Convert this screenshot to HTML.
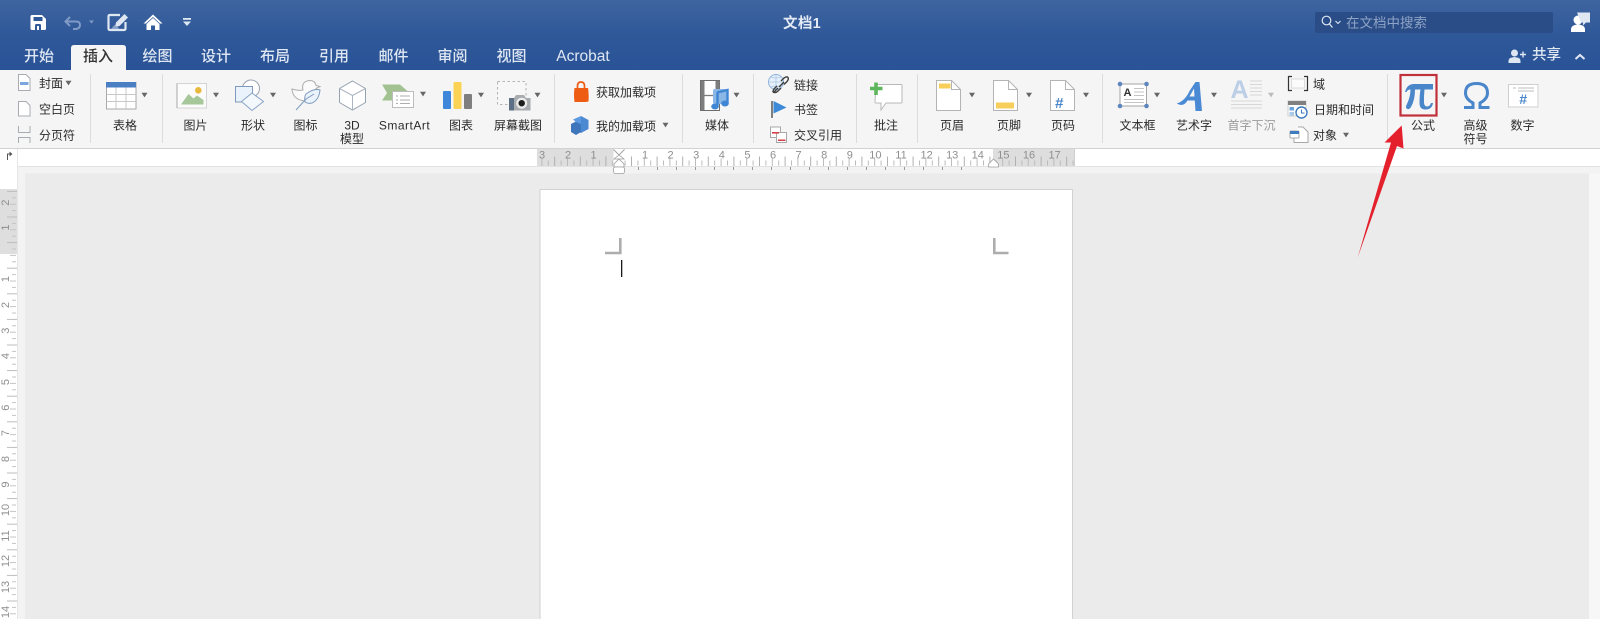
<!DOCTYPE html>
<html lang="zh"><head><meta charset="utf-8"><title>文档1</title>
<style>
html,body{margin:0;padding:0;width:1600px;height:619px;overflow:hidden;background:#ebebeb}
svg{display:block;filter:blur(.3px)}
text{font-family:"Liberation Sans","Noto Sans CJK SC",sans-serif}
.l{font-size:12px;fill:#2b2b2b;text-anchor:middle}
.s{font-size:12px;fill:#2b2b2b}
.t{font-size:15px;fill:#dfe7f3;text-anchor:middle;font-weight:500}
.n{font-size:11px;fill:#8e8e8e;text-anchor:middle}
</style></head><body>
<svg width="1600" height="619" viewBox="0 0 1600 619" xmlns="http://www.w3.org/2000/svg">
<defs>
<linearGradient id="tb" x1="0" y1="0" x2="0" y2="1"><stop offset="0" stop-color="#3f659f"/><stop offset=".5" stop-color="#2f5899"/><stop offset="1" stop-color="#2a5397"/></linearGradient>
<path id="ar" d="M-3-2.2h6L0 2.4z" fill="#666"/>
<pattern id="hr" patternUnits="userSpaceOnUse" x="631" y="148" width="25.6" height="20">
<rect x="0" y="8.5" width="1" height="9.5" fill="#b0b0b0"/><rect x="6.4" y="12.5" width="1" height="5" fill="#bbb"/><rect x="12.8" y="10.5" width="1" height="7.5" fill="#bbb"/><rect x="19.2" y="12.5" width="1" height="5" fill="#bbb"/>
</pattern>
<pattern id="vr" patternUnits="userSpaceOnUse" x="0" y="267.7" width="18" height="25.6">
<rect x="7" y="0" width="10" height="1" fill="#bdbdbd"/><rect x="12" y="6.4" width="4" height="1" fill="#c4c4c4"/><rect x="10" y="12.8" width="6" height="1" fill="#c4c4c4"/><rect x="12" y="19.2" width="4" height="1" fill="#c4c4c4"/>
</pattern>
<pattern id="bt" patternUnits="userSpaceOnUse" x="638" y="166" width="19" height="6"><rect x="0" y="1" width="1" height="3" fill="#999"/></pattern>
</defs>

<!-- backgrounds -->
<rect width="1600" height="70" fill="url(#tb)"/>
<rect y="70" width="1600" height="78" fill="#f5f5f5"/>
<rect y="148" width="1600" height="1" fill="#d2d2d2"/>
<rect y="149" width="1600" height="17" fill="#fff"/>
<rect x="17" y="166" width="1583" height="453" fill="#f3f3f3"/>
<rect y="166" width="1600" height="1" fill="#e2e2e2"/>
<rect y="149" width="17" height="470" fill="#fff"/>
<rect x="17" y="149" width="1" height="470" fill="#e6e6e6"/>
<rect x="25" y="173.5" width="1564" height="446" fill="#ebebeb"/>
<rect x="1589" y="173.5" width="11" height="446" fill="#f7f7f7"/>

<!-- tabs -->
<path d="M71 70V48q0-3 3-3h49q3 0 3 3v22z" fill="#f5f5f5"/>
<text class="t" x="39" y="61">开始</text>
<text class="t" x="98" y="61" style="fill:#333">插入</text>
<text class="t" x="157.500" y="61">绘图</text>
<text class="t" x="216" y="61">设计</text>
<text class="t" x="275" y="61">布局</text>
<text class="t" x="334" y="61">引用</text>
<text class="t" x="393.500" y="61">邮件</text>
<text class="t" x="452.500" y="61">审阅</text>
<text class="t" x="511.500" y="61">视图</text>
<text class="t" x="583" y="61" style="font-size:15.500px">Acrobat</text>
<text x="802" y="28" text-anchor="middle" style="font-size:14.500px;font-weight:700;fill:#e4ebf5;letter-spacing:.3px">文档1</text>

<!-- quick access -->
<path d="M32 15h10l4 4v9.500q0 1.500-1.500 1.500h-12.500q-1.500 0-1.500-1.500v-12q0-1.500 1.500-1.500z" fill="#fff"/>
<rect x="33.500" y="17" width="9" height="4" fill="#2f5899"/>
<path d="M35 30v-4.500q0-1.500 1.500-1.500h3q1.500 0 1.500 1.500V30h-2v-4h-2v4z" fill="#2f5899"/>
<path d="M70 17l-4.500 4.500 4.500 4.500M66 21.500h10q4 0 4 3.500t-4 4h-3" fill="none" stroke="#7f9bc6" stroke-width="2"/>
<path d="M89 20.500h5l-2.500 3z" fill="#7f9bc6"/>
<path d="M120 15h-10q-1.500 0-1.500 1.500v12q0 1.500 1.500 1.500h14q1.500 0 1.500-1.500V22" fill="none" stroke="#dfe7f3" stroke-width="2.200"/>
<path d="M115 27l1-4.500 8.500-8.500 3.500 3.500-8.500 8.500z" fill="#dfe7f3"/>
<path d="M111 29l3.500-4 3 2 2 2z" fill="#8aa4cc"/>
<path d="M153 14.500l-9.500 9h2.500l7-6.500 7 6.500h2.500z" fill="#fff"/>
<path d="M146.500 24l6.500-6 6.500 6v6h-4.500v-4.500h-4V30h-4.500z" fill="#fff"/>
<rect x="183" y="18" width="8" height="1.800" fill="#dfe7f3"/><path d="M183 21.500h8l-4 4.500z" fill="#dfe7f3"/>

<!-- search & account -->
<rect x="1315" y="12" width="238" height="21" rx="2" fill="#2a4d87"/>
<circle cx="1326.500" cy="20.500" r="4.300" fill="none" stroke="#dfe7f3" stroke-width="1.200"/><path d="M1329.500 24l3 3.500" stroke="#dfe7f3" stroke-width="1.300"/>
<path d="M1335.500 21l2.500 2.500 2.500-2.500" fill="none" stroke="#dfe7f3" stroke-width="1.100"/>
<text x="1346" y="27.500" style="font-size:13.500px;fill:#8ea3c5">在文档中搜索</text>
<circle cx="1578" cy="20" r="4.500" fill="#fff"/>
<path d="M1571 32v-2.500q0-3.500 4-4.500l3-1 3 1q4 1 4 4.500V32z" fill="#fff"/>
<path d="M1577 12.500h13v10h-4l-3 3v-3h-2z" fill="#dfe7f3"/>
<circle cx="1514.500" cy="53" r="3.500" fill="#dfe7f3"/><path d="M1508.500 63v-2q0-3 3.500-3.500l2.500-.5 2.500.5q3.500.5 3.500 3.500v2z" fill="#dfe7f3"/>
<path d="M1520 54.500h6M1523 51.500v6" stroke="#dfe7f3" stroke-width="1.400"/>
<text class="t" x="1546.500" y="59.500" style="font-size:14.500px">共享</text>
<path d="M1575.500 59l4.500-4 4.500 4" fill="none" stroke="#dfe7f3" stroke-width="2"/>

<!-- separators -->
<path d="M90.500 74v69M162.500 74v69M554.500 74v69M682.500 74v69M753.500 74v69M856.500 74v69M917.500 74v69M1102.500 74v69M1387.500 74v69" stroke="#dcdcdc" stroke-width="1"/>

<!-- left column -->
<path d="M18.500 74.500h7.500l4 4v12h-11.500z" fill="#fff" stroke="#a8acb2"/><rect x="20" y="82" width="8.500" height="3" fill="#7ba7dc"/>
<path d="M18.500 101.500h7.500l4 4v10.500h-11.500z" fill="#fff" stroke="#a8acb2"/>
<path d="M18.500 126v6.500h11.500V126M18.500 143v-5.500h11.500V143" fill="none" stroke="#a8acb2"/>
<text class="s" x="39" y="87.500">封面</text><use href="#ar" x="68.500" y="83"/>
<text class="s" x="39" y="113.500">空白页</text>
<text class="s" x="39" y="139.500">分页符</text>

<!-- table -->
<rect x="106.500" y="82.500" width="29.500" height="26.500" fill="#fff" stroke="#a8a8a8"/>
<rect x="106" y="82" width="30" height="5.500" fill="#4a7fc4"/>
<path d="M116 87.500V109M126 87.500V109M106.500 94.500H136M106.500 101.500H136" stroke="#c8c8c8"/>
<use href="#ar" x="144.500" y="95"/>
<text class="l" x="125" y="129.500">表格</text>

<!-- picture -->
<rect x="177" y="83.500" width="29.500" height="24.500" fill="#fbfbfb" stroke="#d4d4d4"/>
<path d="M177 83.500V108" stroke="#a8a8a8"/>
<circle cx="198.300" cy="90.300" r="3.300" fill="#e9b93f"/>
<path d="M181 104.500L188.500 94l5 4.500 3.500-3 6.500 4.500v4.500z" fill="#a5c79a"/>
<use href="#ar" x="216" y="95"/>
<text class="l" x="195.500" y="129.500">图片</text>

<!-- shapes -->
<circle cx="251" cy="88.500" r="8.500" fill="#fff" stroke="#97a2b0"/>
<rect x="235.500" y="86.500" width="17" height="15.500" fill="#eaf2fb" stroke="#7f9abe"/>
<path d="M252 93l11.500 8.500-11.500 9-10.500-9z" fill="#f3f8fd" stroke="#8aa3c4"/>
<use href="#ar" x="273" y="95"/>
<text class="l" x="253" y="129.500">形状</text>

<!-- icons -->
<path d="M292 89q6 2 11 1-2-9 7-9.500 5 0 6 5l4 1-4 2q-1 10-7 12-3 1-7 0-9-2-10-11z" fill="#fbfbfb" stroke="#adadad"/>
<path d="M306 94q8-6 14-4-1 10-8 13-4 1-7-1-1-5 1-8z" fill="#eaf2fb" stroke="#7d9bbd"/>
<path d="M296 110l10-11 8-5" fill="none" stroke="#7d9bbd"/>
<text class="l" x="305.500" y="129.500">图标</text>

<!-- cube -->
<path d="M352.500 81l13 7.500v14l-13 7.500-13-7.500v-14z" fill="#fff" stroke="#97a2b0"/>
<path d="M339.500 88.500l13 7 13-7M352.500 95.500V110" fill="none" stroke="#adb5c2"/>
<text class="l" x="352" y="129.500">3D</text>
<text class="l" x="352" y="143">模型</text>

<!-- smartart -->
<path d="M382 84.500h18l8 7h-15v9h-11l5-7.500z" fill="#a3c291"/>
<rect x="392.500" y="91.500" width="21" height="16" fill="#fff" stroke="#bcbcbc"/>
<path d="M396 96h2M400 96h10M396 100h2M400 100h10M396 103.500h2M400 103.500h10" stroke="#adadad"/>
<use href="#ar" x="423" y="94"/>
<text class="l" x="404.500" y="129.500" style="letter-spacing:.5px">SmartArt</text>

<!-- chart -->
<rect x="443" y="91" width="8" height="18" rx="1" fill="#3f87d9"/>
<rect x="453.500" y="82" width="8" height="27" rx="1" fill="#fcd255"/>
<rect x="464" y="94" width="8" height="15" rx="1" fill="#7f7f7f"/>
<use href="#ar" x="481" y="95"/>
<text class="l" x="461" y="129.500">图表</text>

<!-- screenshot -->
<rect x="497.500" y="81.500" width="28.500" height="23" fill="#f7f7f7" stroke="#b4b4b4" stroke-dasharray="2.500 2.500"/>
<path d="M509 98h5l2-3h8l2 3h4.500v12.500H509z" fill="#a8abaf"/>
<rect x="509" y="98" width="5" height="12.500" fill="#5d6f85"/>
<circle cx="521.700" cy="103.200" r="5.500" fill="#ececec"/><circle cx="521.700" cy="103.200" r="3.200" fill="#1d1d1d"/>
<use href="#ar" x="537.500" y="95"/>
<text class="l" x="518" y="129.500">屏幕截图</text>

<!-- addins -->
<path d="M574.500 88h13.500q1 6 .5 13.500l-3 .5h-11q-1-7 0-14z" fill="#ee5b12"/>
<path d="M577.500 89v-3q0-4 3.500-4t3.500 4v3" fill="none" stroke="#ee5b12" stroke-width="1.700"/>
<text class="s" x="596" y="96.500">获取加载项</text>
<path d="M581 116l7.500 4v9l-7.500 4-2-1v-7l-1-.5z" fill="#4b89d3"/><path d="M571 124l5-2.500 5 2.500v8l-5 3-5-3z" fill="#3f75bb"/><path d="M573 119.500l8-3.500v8l-5-2z" fill="#5b99e0"/>
<text class="s" x="596" y="130.500">我的加载项</text>
<use href="#ar" x="665.500" y="125"/>

<!-- media -->
<rect x="700.500" y="80.500" width="19" height="30" fill="#fff" stroke="#6e6e6e"/>
<path d="M701 81h3.500v29H701zM715.500 81h4v10h-4z" fill="#7e7e7e"/>
<path d="M704 95.500h10" stroke="#7c7c7c" stroke-width="1.300"/>
<rect x="713" y="89" width="15.500" height="15" rx="2" fill="#8ab7e6"/>
<path d="M717 92.500l10.500-2.500v13.500" fill="none" stroke="#3f86d4" stroke-width="2.400"/>
<path d="M717.500 92.500v14" stroke="#3f86d4" stroke-width="2.400"/>
<ellipse cx="715" cy="106.500" rx="3.800" ry="3" fill="#3f86d4"/><ellipse cx="725" cy="103.500" rx="3.800" ry="3" fill="#3f86d4"/>
<use href="#ar" x="736.500" y="95"/>
<text class="l" x="717" y="129.500">媒体</text>

<!-- link group -->
<circle cx="776" cy="82" r="7.500" fill="#e6f0fb" stroke="#8fb2dc"/>
<path d="M769 82h14M776 75v14M771 77q5 2 10 0M771 87q5-2 10 0" fill="none" stroke="#aac6e6" stroke-width=".8"/>
<path d="M774 92l4-4M781 81l3-3q3-2 4-.5t-1 4l-3 3M777 86l-3 3q-2 3 0 3.500t4-1.500l3-3M779 87l5-5" fill="none" stroke="#3c3c3c" stroke-width="1.400"/>
<text class="s" x="794" y="89.500">链接</text>
<rect x="771" y="101" width="2" height="17" fill="#7f7f7f"/><path d="M773.500 101l13 6.500-13 6z" fill="#3c8ad8"/>
<text class="s" x="794" y="114">书签</text>
<rect x="770.500" y="127" width="10" height="10.500" fill="#fff" stroke="#a8a8a8"/><rect x="776.500" y="132.500" width="10" height="10" fill="#fff" stroke="#a8a8a8"/>
<rect x="772" y="132" width="7" height="1.600" fill="#d7414a"/><rect x="778" y="139.500" width="7.500" height="1.500" fill="#d7414a"/>
<text class="s" x="794" y="139.500">交叉引用</text>

<!-- comment -->
<path d="M876 84.500h25q1 0 1 1V102q0 1-1 1h-15l-5 7v-7h-5q-1 0-1-1z" fill="#fff" stroke="#b8b8b8"/>
<path d="M870 88.500h12.500M876 82.500v12.500" stroke="#5fb55b" stroke-width="3.600"/>
<text class="l" x="886" y="129.500">批注</text>

<!-- header/footer/page number -->
<path d="M936.500 80.500h15l9 9v21h-24z" fill="#fff" stroke="#b4b4b4"/><path d="M951.500 80.500v9h9" fill="none" stroke="#b4b4b4"/><rect x="939" y="83.500" width="11.500" height="5" fill="#f7ce5a"/>
<use href="#ar" x="972" y="95"/><text class="l" x="952" y="129.500">页眉</text>
<path d="M993.500 80.500h15l9 9v21h-24z" fill="#fff" stroke="#b4b4b4"/><path d="M1008.500 80.500v9h9" fill="none" stroke="#b4b4b4"/><rect x="996" y="102.500" width="18" height="6" fill="#f7ce5a"/>
<use href="#ar" x="1029" y="95"/><text class="l" x="1009" y="129.500">页脚</text>
<path d="M1050.500 80.500h15l9 9v21h-24z" fill="#fff" stroke="#b4b4b4"/><path d="M1065.500 80.500v9h9" fill="none" stroke="#b4b4b4"/>
<text x="1059" y="108" text-anchor="middle" style="font-size:15px;font-weight:700;font-style:italic;fill:#4a86c9">#</text>
<use href="#ar" x="1086" y="95"/><text class="l" x="1063" y="129.500">页码</text>

<!-- text box -->
<rect x="1120" y="84" width="26.500" height="22" fill="#fff" stroke="#a4a4a4"/>
<g fill="#5c86bd"><circle cx="1120" cy="84" r="2.300"/><circle cx="1146.500" cy="84" r="2.300"/><circle cx="1120" cy="106" r="2.300"/><circle cx="1146.500" cy="106" r="2.300"/></g>
<text x="1127.500" y="96" text-anchor="middle" style="font-size:11px;font-weight:700;fill:#333">A</text>
<path d="M1134 88.500h10M1134 92h10M1134 95.500h10M1124 99.500h20M1124 102.500h20" stroke="#c4c4c4"/>
<use href="#ar" x="1157" y="95"/><text class="l" x="1137.500" y="129.500">文本框</text>

<!-- wordart -->
<path fill-rule="evenodd" d="M1176.700 103.500Q1185 101 1189.500 91L1195.500 82H1199.500L1202 111H1195.500L1194.800 100.500H1187.500Q1183.500 107.500 1176.700 103.500ZM1189.500 96.500H1194.500L1194 88.500Z" fill="#4a8ad4"/>
<use href="#ar" x="1214" y="95"/><text class="l" x="1194" y="129.500">艺术字</text>

<!-- drop cap -->
<text x="1239.500" y="98" text-anchor="middle" style="font-size:25px;font-weight:700;fill:#bccfe7">A</text>
<path d="M1250 81h12M1250 84.500h12M1250 88h12M1250 91.500h12M1250 95h12M1231 101h31M1231 104.500h31M1231 108h31" stroke="#d8d8d8"/>
<use href="#ar" x="1271" y="95" opacity=".4"/><text class="l" x="1251.500" y="129.500" style="fill:#9a9a9a">首字下沉</text>

<!-- field/date/object -->
<path d="M1292 76.500h-3.500v14h3.500M1304 76.500h3.500v14H1304" fill="none" stroke="#333" stroke-width="1.200"/>
<rect x="1291.500" y="79" width="13" height="9" fill="#fbfbfb" stroke="#dcdcdc"/>
<text class="s" x="1313" y="88.500">域</text>
<rect x="1288" y="101" width="18" height="15" fill="#fff" stroke="#cfcfcf"/><rect x="1288" y="101" width="18" height="4" fill="#808080"/>
<rect x="1289.500" y="107" width="4.500" height="3.500" fill="#6ba3db"/><rect x="1289.500" y="112" width="4.500" height="3.500" fill="#a9c9ea"/>
<circle cx="1301.500" cy="112.500" r="5.500" fill="#fff" stroke="#3f7cbf" stroke-width="1.400"/><path d="M1301.500 109.500v3.500h3" fill="none" stroke="#3f7cbf"/>
<text class="s" x="1314" y="114">日期和时间</text>
<path d="M1298 127h5l5 5v10.500h-14V136" fill="#fff" stroke="#a8a8a8"/><rect x="1290" y="131" width="9" height="7" rx="1" fill="#fff" stroke="#a8a8a8"/><rect x="1290" y="131" width="9" height="3" fill="#3f7cbf"/>
<text class="s" x="1313" y="139.500">对象</text><use href="#ar" x="1346" y="135"/>

<!-- equation -->
<path d="M1405 92Q1407 84 1414 84H1433V89.500H1424.500Q1423.800 96 1424 103Q1424.500 106.500 1427 106.500Q1430 106.500 1431 103L1433 103Q1432 109.500 1425.500 109.500Q1419.500 109.500 1419.500 103Q1419.500 95 1420.500 89.500H1415Q1415 100 1411 107Q1409.500 109.500 1407.500 109Q1405 108 1406.500 105Q1410.500 97 1410.500 89.500Q1407.500 89.500 1406.500 92Z" fill="#4a86ca"/>
<rect x="1400.500" y="75" width="36" height="40.500" fill="none" stroke="#c0303a" stroke-width="2.200"/>
<use href="#ar" x="1444" y="95"/><text class="l" x="1423" y="129.500">公式</text>

<!-- omega -->
<path d="M1464 107.500H1473V103Q1465.500 99 1465.500 93Q1465.500 83.500 1476.500 83.500Q1487.500 83.500 1487.500 93Q1487.500 99 1480 103V107.500H1489.500" fill="none" stroke="#4a86ca" stroke-width="3"/>
<text class="l" x="1475.500" y="129.500">高级</text><text class="l" x="1475.500" y="143">符号</text>

<!-- number -->
<rect x="1508.500" y="84.500" width="29.500" height="22.500" fill="#fff" stroke="#cfcfcf"/>
<path d="M1538 85v22h-29" fill="none" stroke="#dedede" stroke-width="1.500"/>
<path d="M1513 88h3M1518 88h16M1518 91h16" stroke="#a8a8a8" stroke-width=".8"/>
<text x="1523" y="104" text-anchor="middle" style="font-size:14px;font-weight:700;font-style:italic;fill:#4a86ca">#</text>
<text class="l" x="1522.500" y="129.500">数字</text>

<!-- horizontal ruler -->
<rect x="537" y="149" width="76.500" height="17" fill="#dedede"/>
<rect x="993" y="149" width="81" height="17" fill="#dedede"/>
<rect x="537" y="149" width="537" height="17" fill="url(#hr)"/>
<rect x="1074" y="149" width="1" height="17" fill="#cfcfcf"/>
<g>
<text class="n" x="542" y="158.500">3</text><text class="n" x="568" y="158.500">2</text><text class="n" x="593.600" y="158.500">1</text>
<text class="n" x="645" y="158.500">1</text><text class="n" x="670.600" y="158.500">2</text><text class="n" x="696.200" y="158.500">3</text><text class="n" x="721.800" y="158.500">4</text><text class="n" x="747.400" y="158.500">5</text><text class="n" x="773" y="158.500">6</text><text class="n" x="798.600" y="158.500">7</text><text class="n" x="824.200" y="158.500">8</text><text class="n" x="849.800" y="158.500">9</text><text class="n" x="875.400" y="158.500">10</text><text class="n" x="901" y="158.500">11</text><text class="n" x="926.600" y="158.500">12</text><text class="n" x="952.200" y="158.500">13</text><text class="n" x="977.800" y="158.500">14</text><text class="n" x="1003.400" y="158.500">15</text><text class="n" x="1029" y="158.500">16</text><text class="n" x="1054.600" y="158.500">17</text>
</g>
<rect x="638" y="166" width="342" height="6" fill="url(#bt)"/>
<!-- indents -->
<path d="M613.500 149.500l5.500 5.500 5.500-5.500" fill="none" stroke="#9e9e9e" stroke-width=".9"/>
<path d="M619 155l-5 4h10z" fill="#fff" stroke="#9e9e9e" stroke-width=".8"/>
<path d="M619 159l5 5v3h-10v-3z" fill="#fff" stroke="#9e9e9e" stroke-width=".8"/>
<rect x="613.500" y="167" width="11" height="6.500" rx="2" fill="#fff" stroke="#9e9e9e" stroke-width=".8"/>
<path d="M993.500 159l5 5v3h-10v-3z" fill="#fff" stroke="#9e9e9e" stroke-width=".8"/>
<!-- corner tab icon -->
<path d="M7.500 160v-6h2.500" fill="none" stroke="#555" stroke-width="1"/><path d="M9.500 151.500l3 2.500-3 2.500z" fill="#555"/>

<!-- vertical ruler -->
<rect y="189" width="17" height="65" fill="#dedede"/>
<rect y="189" width="17" height="430" fill="url(#vr)"/>
<g>
<text class="n" transform="translate(9,202.700) rotate(-90)">2</text><text class="n" transform="translate(9,227.500) rotate(-90)">1</text>
<text class="n" transform="translate(9,279) rotate(-90)">1</text><text class="n" transform="translate(9,305) rotate(-90)">2</text><text class="n" transform="translate(9,330.700) rotate(-90)">3</text><text class="n" transform="translate(9,356) rotate(-90)">4</text><text class="n" transform="translate(9,382) rotate(-90)">5</text><text class="n" transform="translate(9,407.700) rotate(-90)">6</text><text class="n" transform="translate(9,433) rotate(-90)">7</text><text class="n" transform="translate(9,459) rotate(-90)">8</text><text class="n" transform="translate(9,484.500) rotate(-90)">9</text><text class="n" transform="translate(9,510) rotate(-90)">10</text><text class="n" transform="translate(9,536) rotate(-90)">11</text><text class="n" transform="translate(9,561) rotate(-90)">12</text><text class="n" transform="translate(9,587) rotate(-90)">13</text><text class="n" transform="translate(9,612) rotate(-90)">14</text>
</g>

<!-- page -->
<rect x="539.500" y="189" width="533.500" height="430" fill="#d2d2d2"/>
<rect x="540.500" y="190" width="531.500" height="429" fill="#fff"/>
<path d="M605 253h15.300v-15" fill="none" stroke="#adadad" stroke-width="2.600"/>
<path d="M994.300 238v15h14.200" fill="none" stroke="#adadad" stroke-width="2.600"/>
<rect x="621" y="260" width="1.300" height="17" fill="#1a1a1a"/>

<!-- red arrow -->
<path d="M1401.700 125.500L1384.500 142.500 1391 142.500 1357.700 257.500 1397 146 1403.500 148.500z" fill="#e3202c"/>
</svg>
</body></html>
